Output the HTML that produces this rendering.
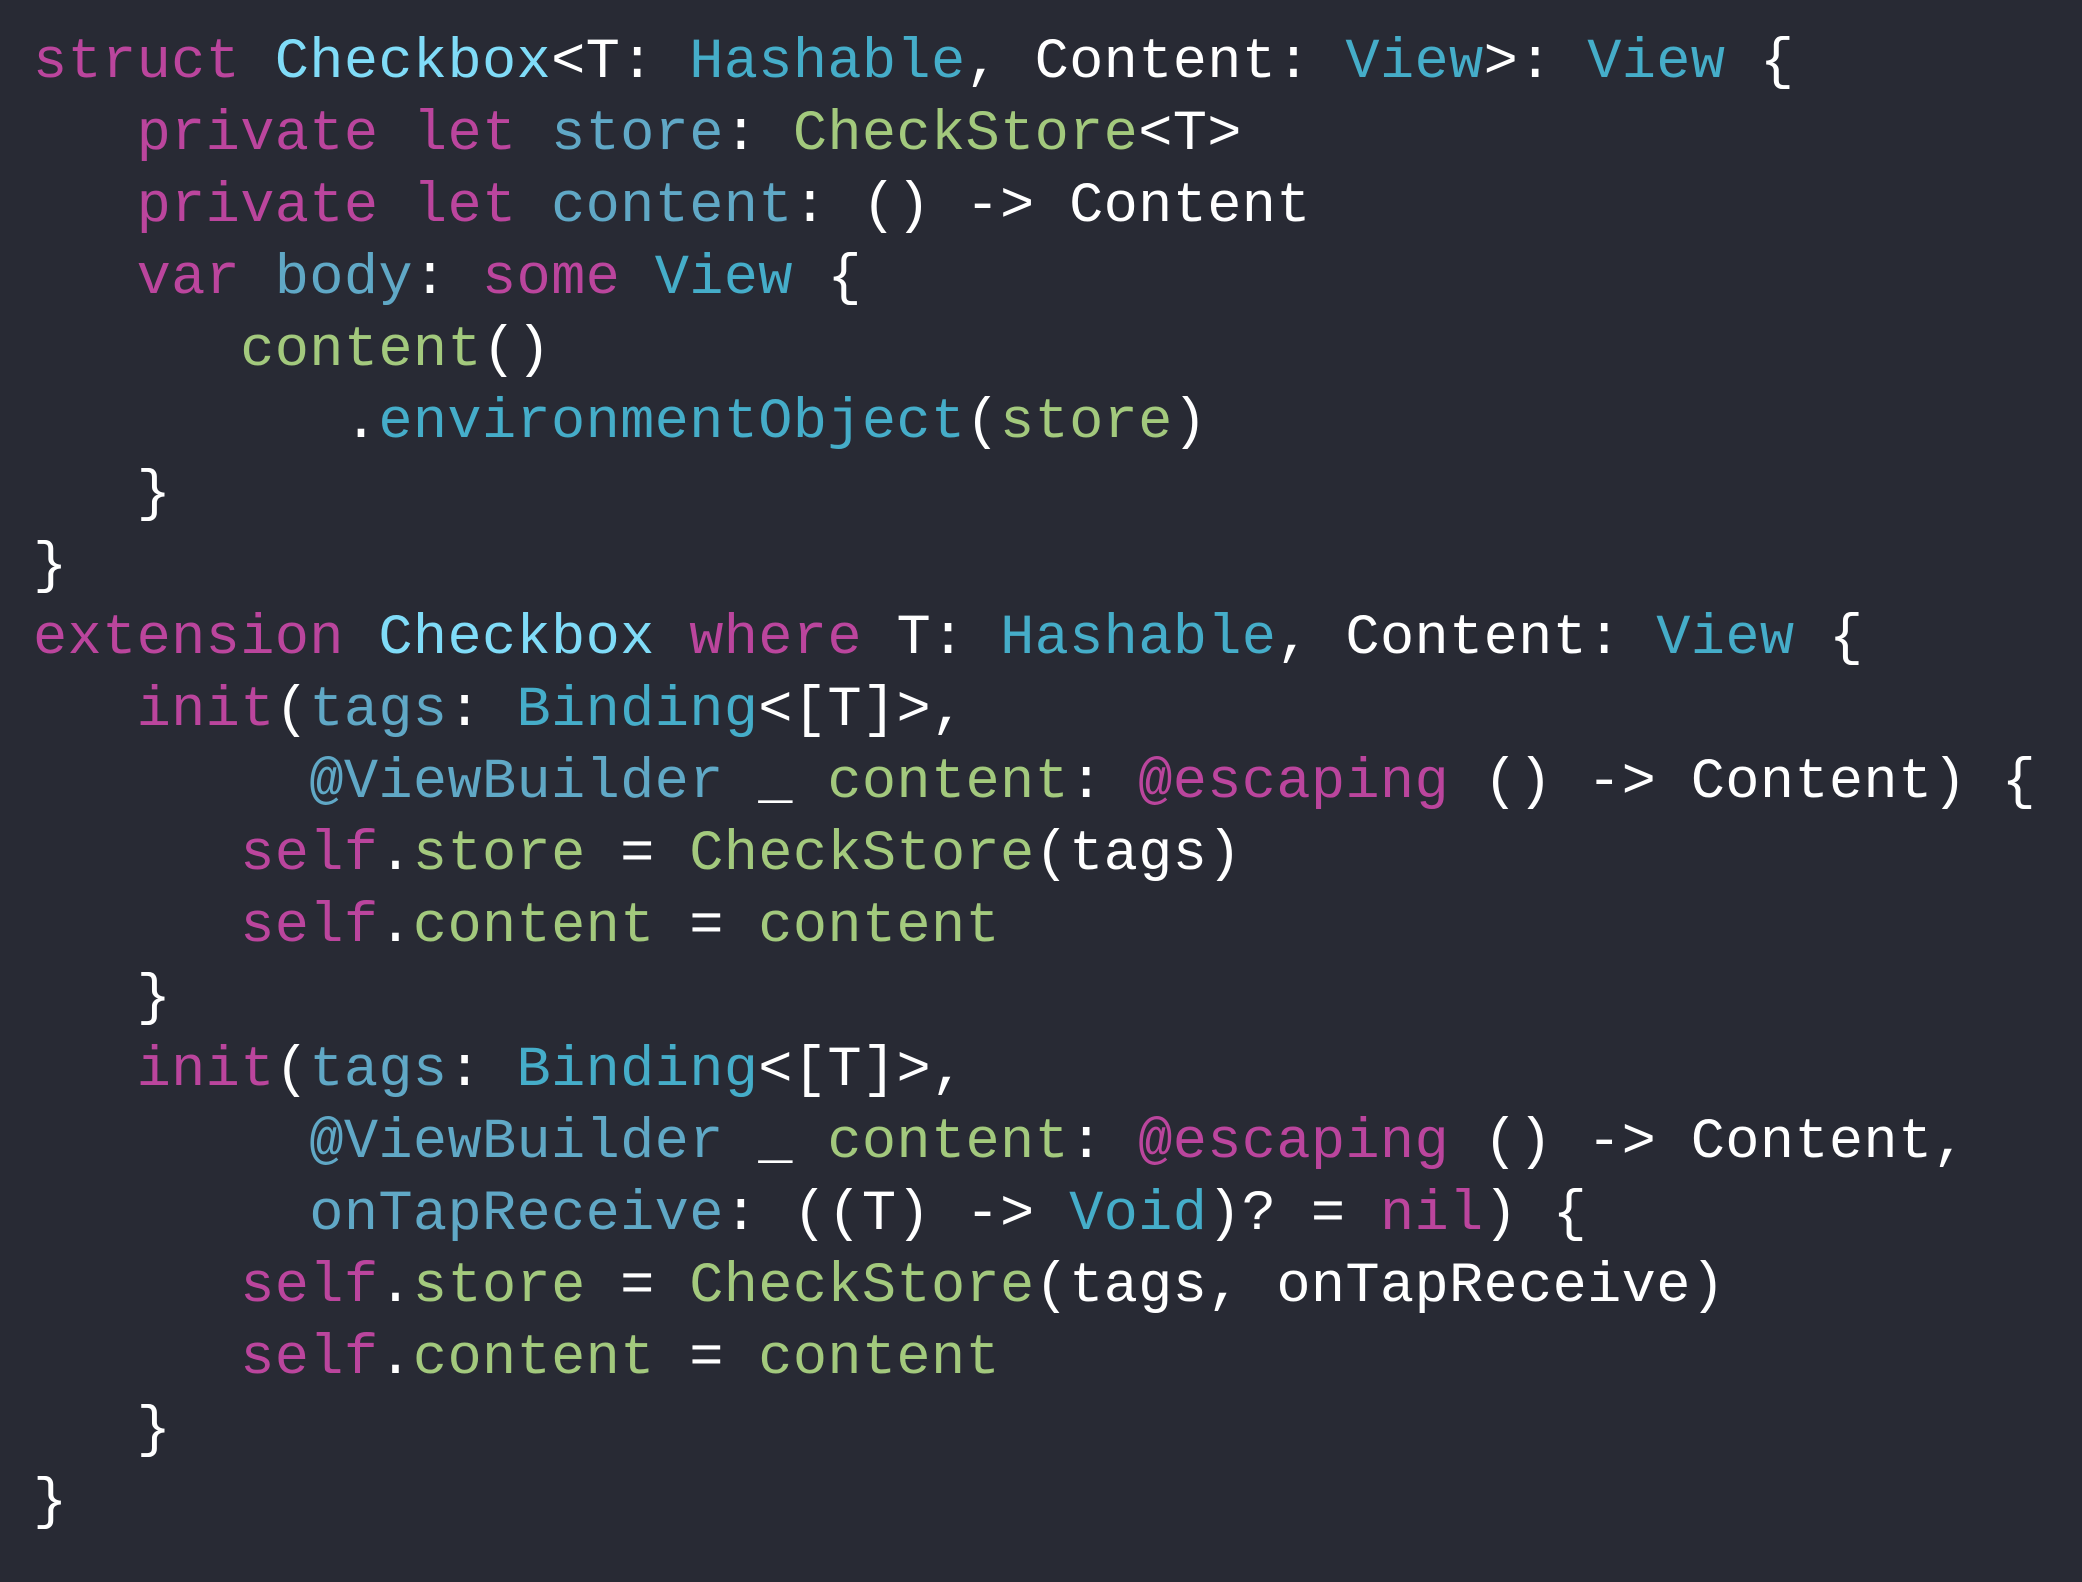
<!DOCTYPE html>
<html><head><meta charset="utf-8"><style>
html,body{margin:0;padding:0;background:#282a34;width:2082px;height:1582px;overflow:hidden}
pre{margin:0;padding:27px 0 0 33px;font-family:"Liberation Mono",monospace;font-size:57px;letter-spacing:0.33px;line-height:72px;color:#ffffff;white-space:pre}
.k{color:#bb459d}.d{color:#80dcf8}.t{color:#45adc9}.p{color:#60a8c6}.g{color:#a3c97d}
</style></head><body><pre><span class="k">struct</span> <span class="d">Checkbox</span>&lt;T: <span class="t">Hashable</span>, Content: <span class="t">View</span>&gt;: <span class="t">View</span> {
   <span class="k">private</span> <span class="k">let</span> <span class="p">store</span>: <span class="g">CheckStore</span>&lt;T&gt;
   <span class="k">private</span> <span class="k">let</span> <span class="p">content</span>: () -&gt; Content
   <span class="k">var</span> <span class="p">body</span>: <span class="k">some</span> <span class="t">View</span> {
      <span class="g">content</span>()
         .<span class="t">environmentObject</span>(<span class="g">store</span>)
   }
}
<span class="k">extension</span> <span class="d">Checkbox</span> <span class="k">where</span> T: <span class="t">Hashable</span>, Content: <span class="t">View</span> {
   <span class="k">init</span>(<span class="p">tags</span>: <span class="t">Binding</span>&lt;[T]&gt;,
        <span class="p">@ViewBuilder</span> _ <span class="g">content</span>: <span class="k">@escaping</span> () -&gt; Content) {
      <span class="k">self</span>.<span class="g">store</span> = <span class="g">CheckStore</span>(tags)
      <span class="k">self</span>.<span class="g">content</span> = <span class="g">content</span>
   }
   <span class="k">init</span>(<span class="p">tags</span>: <span class="t">Binding</span>&lt;[T]&gt;,
        <span class="p">@ViewBuilder</span> _ <span class="g">content</span>: <span class="k">@escaping</span> () -&gt; Content,
        <span class="p">onTapReceive</span>: ((T) -&gt; <span class="t">Void</span>)? = <span class="k">nil</span>) {
      <span class="k">self</span>.<span class="g">store</span> = <span class="g">CheckStore</span>(tags, onTapReceive)
      <span class="k">self</span>.<span class="g">content</span> = <span class="g">content</span>
   }
}</pre></body></html>
